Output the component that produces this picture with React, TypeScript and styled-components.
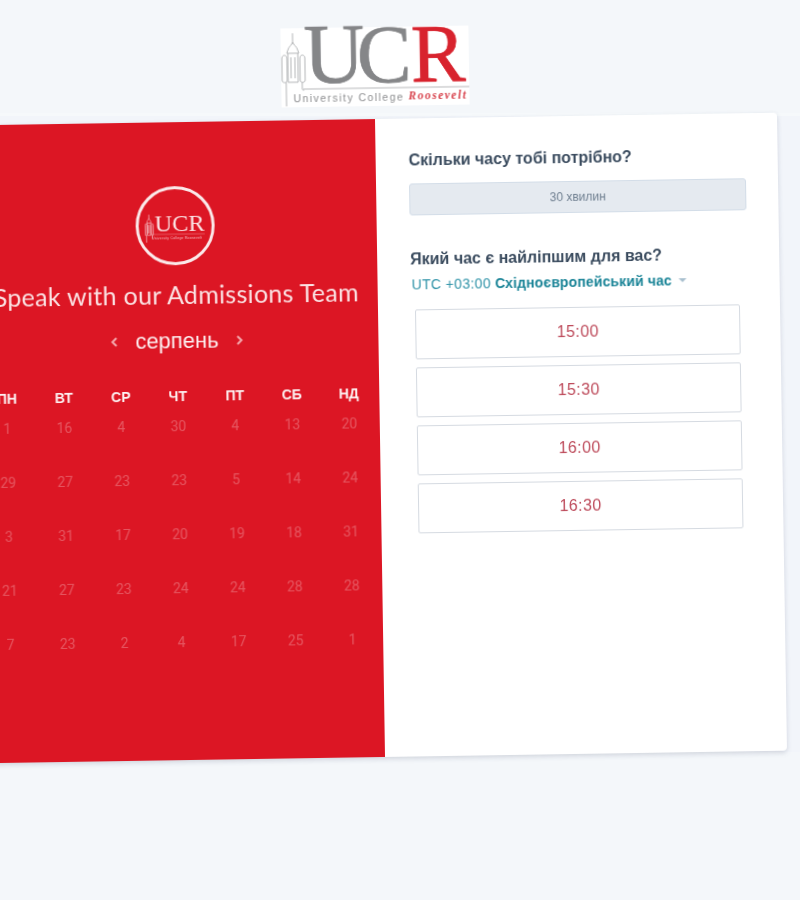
import React from "react";
import styled, { createGlobalStyle } from "styled-components";

const weekdays = ["ПН", "ВТ", "СР", "ЧТ", "ПТ", "СБ", "НД"];
const days = [
  1, 16, 4, 30, 4, 13, 20,
  29, 27, 23, 23, 5, 14, 24,
  3, 31, 17, 20, 19, 18, 31,
  21, 27, 23, 24, 24, 28, 28,
  7, 23, 2, 4, 17, 25, 1,
];
const times = ["15:00", "15:30", "16:00", "16:30"];

const Tower: React.FC<{ color: string; width?: number }> = ({ color, width = 1 }) => (
  <g fill="none" stroke={color} strokeWidth={width}>
    <path d="M12 5v11M12 14c-1 3-4 4-5 8l-1 3h12l-1-3c-1-4-4-5-5-8z" />
    <path d="M7 25v29h10V25M10 29v21M14 29v21" />
    <path d="M1 30c0-4 5-4 5 0v22c0 3-5 3-5 0zM19 30c0-4 5-4 5 0v22c0 3-5 3-5 0z" />
    <path d="M21 54v7c0 1 1 1 2 1M5 54v24" />
  </g>
);

const HeaderLogo: React.FC = () => (
  <LogoSvg width="188" height="79" viewBox="0 0 188 79">
    <rect width="188" height="79" fill="#fff" />
    <Tower color="#b4b6b8" />
    <text x="23" y="55" fontFamily="Liberation Serif" fontSize="84" fill="#858688" stroke="#858688" strokeWidth=".7">U</text>
    <text x="76" y="55" fontFamily="Liberation Serif" fontSize="82" fill="#858688" stroke="#858688" strokeWidth=".7">C</text>
    <text x="130" y="55" fontFamily="Liberation Serif" fontSize="82" fill="#d8232e" stroke="#d8232e" strokeWidth=".7">R</text>
    <path d="M22 61h166" stroke="#b9babc" strokeWidth="1" />
    <text x="12" y="74" fontFamily="Liberation Sans" fontSize="10.5" fill="#8d8e90" letterSpacing="1.45">University College</text>
    <text x="127" y="73" fontFamily="Liberation Serif" fontStyle="italic" fontWeight="bold" fontSize="11.5" fill="#d8424c" letterSpacing="1.5">Roosevelt</text>
  </LogoSvg>
);

const App: React.FC = () => (
  <Page>
    <GlobalStyle />
    <Header>
      <HeaderLogo />
    </Header>
    <Stage>
      <Card>
        <Calendar>
          <Badge>
            <svg width="62" height="32" viewBox="0 0 62 32">
              <g transform="translate(0 2) scale(.36 .42)">
                <Tower color="#f2b3b8" width={2} />
              </g>
              <text x="10" y="21" fontFamily="Liberation Serif" fontSize="24" fill="#fbe4e5" textLength="50" lengthAdjust="spacingAndGlyphs">UCR</text>
              <path d="M5 24h55" stroke="#f2b3b8" strokeWidth=".4" />
              <text x="7" y="29" fontFamily="Liberation Sans" fontSize="3.5" fill="#f3bcc0" textLength="50">University College Roosevelt</text>
            </svg>
          </Badge>
          <Title>Speak with our Admissions Team</Title>
          <MonthRow>
            <Chevron viewBox="0 0 8 12">
              <path d="M6 2L2 6l4 4" />
            </Chevron>
            <Month>серпень</Month>
            <Chevron viewBox="0 0 8 12">
              <path d="M2 2l4 4-4 4" />
            </Chevron>
          </MonthRow>
          <WeekRow>
            {weekdays.map((d) => (
              <Weekday key={d}>{d}</Weekday>
            ))}
          </WeekRow>
          <DayGrid>
            {days.map((d, i) => (
              <Day key={i}>{d}</Day>
            ))}
          </DayGrid>
        </Calendar>
        <Details>
          <Question>Скільки часу тобі потрібно?</Question>
          <Duration>30 хвилин</Duration>
          <SecondQuestion>Який час є найліпшим для вас?</SecondQuestion>
          <Timezone>
            UTC +03:00
            <strong>Східноєвропейський час</strong>
            <Caret />
          </Timezone>
          <TimeList>
            {times.map((t) => (
              <TimeButton key={t}>{t}</TimeButton>
            ))}
          </TimeList>
        </Details>
      </Card>
    </Stage>
  </Page>
);

export default App;

const GlobalStyle = createGlobalStyle`
  html, body {
    margin: 0;
    background: #f4f7fa;
    overflow: hidden;
  }
`;

const Page = styled.div`
  width: 800px;
  height: 900px;
  overflow: hidden;
  font-family: "Liberation Sans", Arial, sans-serif;
  color: #33475b;
`;

const Header = styled.header`
  height: 113px;
  box-sizing: border-box;
  padding: 27px 51px 0 0;
  display: flex;
  justify-content: center;
  align-items: flex-start;
`;

const LogoSvg = styled.svg`
  overflow: visible;
  transform: rotate(-0.9deg);
  filter: blur(0.5px);
`;

const Stage = styled.main`
  height: 639px;
  box-sizing: border-box;
  padding-top: 3px;
  background: #f2f5fa;
  border-top: 3px solid #f6f9fb;
`;

const Card = styled.section`
  width: 805px;
  height: 638px;
  margin-left: -23px;
  display: flex;
  background: #fff;
  border-radius: 4px;
  box-shadow: 0 2px 5px rgba(80, 90, 120, 0.22);
  transform: rotate(-0.9deg);
  filter: blur(0.25px);
`;

const Calendar = styled.div`
  width: 403px;
  flex: none;
  box-sizing: border-box;
  padding-top: 64px;
  display: flex;
  flex-direction: column;
  align-items: center;
  background: #dc1624;
  color: #fff;
`;

const Badge = styled.div`
  width: 79px;
  height: 79px;
  box-sizing: border-box;
  border: 3px solid #fbe9ea;
  border-radius: 50%;
  display: flex;
  align-items: center;
  justify-content: center;
`;

const Title = styled.h1`
  margin: 14px 0 0;
  font-family: Lato, sans-serif;
  font-size: 25px;
  font-weight: 400;
  line-height: 30px;
  letter-spacing: 0.3px;
  white-space: nowrap;
  color: #fbe3e4;
`;

const MonthRow = styled.div`
  margin-top: 20px;
  display: flex;
  align-items: center;
  gap: 17px;
`;

const Month = styled.span`
  font-size: 22px;
  line-height: 24px;
  color: #fdf1f2;
`;

const Chevron = styled.svg`
  width: 8px;
  height: 12px;
  fill: none;
  stroke: #f4a9ae;
  stroke-width: 2;
`;

const WeekRow = styled.div`
  margin-top: 34px;
  display: grid;
  grid-template-columns: repeat(7, 57px);
`;

const Weekday = styled.div`
  text-align: center;
  font-size: 14px;
  font-weight: 700;
  line-height: 18px;
  color: #fdf3f3;
`;

const DayGrid = styled.div`
  margin-top: 12px;
  display: grid;
  grid-template-columns: repeat(7, 57px);
  row-gap: 36px;
`;

const Day = styled.div`
  text-align: center;
  font-family: Roboto, sans-serif;
  font-size: 14px;
  line-height: 18px;
  color: rgba(255, 255, 255, 0.27);
`;

const Details = styled.div`
  flex: 1;
  box-sizing: border-box;
  padding: 32px 32px 0 33px;
`;

const Question = styled.h2`
  margin: 0;
  font-size: 16px;
  font-weight: 700;
  line-height: 20px;
  color: #3a4b5e;
`;

const SecondQuestion = styled(Question)`
  margin-top: 34px;
`;

const Duration = styled.div`
  margin-top: 13px;
  width: 337px;
  height: 32px;
  box-sizing: border-box;
  display: flex;
  align-items: center;
  justify-content: center;
  background: #e5eaf0;
  border: 1px solid #d3dde8;
  border-radius: 3px;
  font-size: 12px;
  color: #6f7f90;
`;

const Timezone = styled.div`
  margin: 5px 0 0 1px;
  display: flex;
  align-items: center;
  gap: 4px;
  font-size: 14px;
  line-height: 20px;
  letter-spacing: 0.35px;
  color: #2f93a8;
  white-space: pre;

  strong {
    letter-spacing: 0.12px;
    color: #1a8497;
  }
`;

const Caret = styled.i`
  margin-left: 3px;
  border: 4px solid transparent;
  border-top: 4px solid #a9c0cf;
  border-bottom: 0;
`;

const TimeList = styled.div`
  margin: 15px 0 0 4px;
  width: 325px;
  display: flex;
  flex-direction: column;
  gap: 8px;
`;

const TimeButton = styled.button`
  height: 50px;
  padding: 0;
  background: #fff;
  border: 1px solid #d5dae1;
  border-radius: 2px;
  font-family: "Liberation Sans", Arial, sans-serif;
  font-size: 16px;
  letter-spacing: 0.4px;
  color: #bd4a5a;
`;
